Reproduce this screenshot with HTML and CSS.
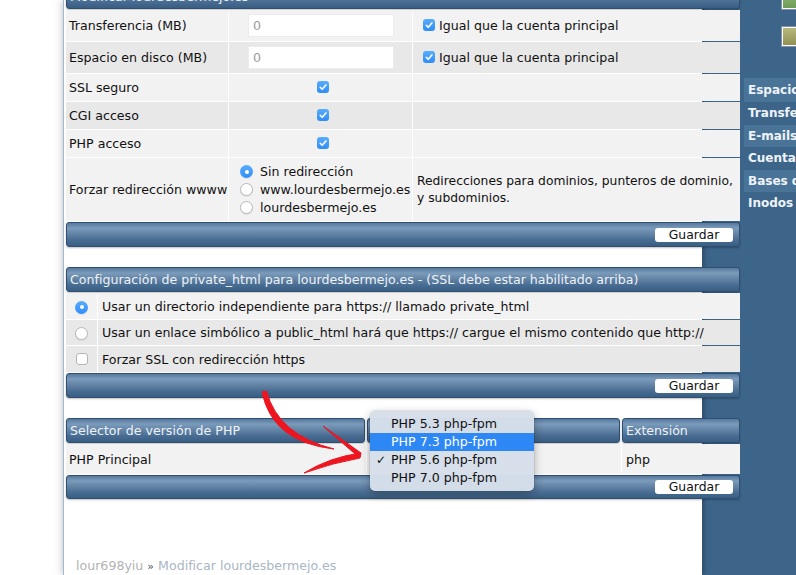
FILE: index.html
```html
<!DOCTYPE html>
<html lang="es">
<head>
    <meta charset="UTF-8">
    <title>Modificar lourdesbermejo.es</title>
    <link rel="stylesheet" href="styles.css">
</head>
<body>
    <div class="page">
        <div class="gutter"></div>

        <div class="main">
            <!-- datos del dominio -->
            <div class="box box-first">
                <div class="bar head">Modificar lourdesbermejo.es</div>
                <table class="grid">
                    <colgroup><col class="c-label"><col class="c-value"><col></colgroup>
                    <tr class="light r-input">
                        <td class="label">Transferencia (MB)</td>
                        <td class="value"><input class="field" type="text" placeholder="0"></td>
                        <td class="extra"><span class="chk on"><svg viewBox="0 0 12 12"><path d="M3.2 6.3 5.2 8.3 8.9 3.9"/></svg></span>Igual que la cuenta principal</td>
                    </tr>
                    <tr class="dark r-input">
                        <td class="label">Espacio en disco (MB)</td>
                        <td class="value"><input class="field" type="text" placeholder="0"></td>
                        <td class="extra"><span class="chk on"><svg viewBox="0 0 12 12"><path d="M3.2 6.3 5.2 8.3 8.9 3.9"/></svg></span>Igual que la cuenta principal</td>
                    </tr>
                    <tr class="light r-flag">
                        <td class="label">SSL seguro</td>
                        <td class="center"><span class="chk on"><svg viewBox="0 0 12 12"><path d="M3.2 6.3 5.2 8.3 8.9 3.9"/></svg></span></td>
                        <td></td>
                    </tr>
                    <tr class="dark r-flag">
                        <td class="label">CGI acceso</td>
                        <td class="center"><span class="chk on"><svg viewBox="0 0 12 12"><path d="M3.2 6.3 5.2 8.3 8.9 3.9"/></svg></span></td>
                        <td></td>
                    </tr>
                    <tr class="light r-flag">
                        <td class="label">PHP acceso</td>
                        <td class="center"><span class="chk on"><svg viewBox="0 0 12 12"><path d="M3.2 6.3 5.2 8.3 8.9 3.9"/></svg></span></td>
                        <td></td>
                    </tr>
                    <tr class="light r-redirect">
                        <td class="label">Forzar redirección wwww</td>
                        <td class="options">
                            <div class="opt"><span class="radio on"></span>Sin redirección</div>
                            <div class="opt"><span class="radio"></span>www.lourdesbermejo.es</div>
                            <div class="opt"><span class="radio"></span>lourdesbermejo.es</div>
                        </td>
                        <td class="note">Redirecciones para dominios, punteros de dominio, y subdominios.</td>
                    </tr>
                </table>
                <div class="bar foot"><button class="save">Guardar</button></div>
            </div>

            <!-- private_html -->
            <div class="box">
                <div class="bar head">Configuración de private_html para lourdesbermejo.es - (SSL debe estar habilitado arriba)</div>
                <table class="grid">
                    <colgroup><col class="c-mark"><col></colgroup>
                    <tr class="light r-ssl">
                        <td class="mark"><span class="radio on"></span></td>
                        <td class="text">Usar un directorio independiente para https:// llamado private_html</td>
                    </tr>
                    <tr class="dark r-ssl">
                        <td class="mark"><span class="radio"></span></td>
                        <td class="text">Usar un enlace simbólico a public_html hará que https:// cargue el mismo contenido que http://</td>
                    </tr>
                    <tr class="dark r-ssl">
                        <td class="mark"><span class="chk"></span></td>
                        <td class="text">Forzar SSL con redirección https</td>
                    </tr>
                </table>
                <div class="bar foot"><button class="save">Guardar</button></div>
            </div>

            <!-- selector de PHP -->
            <div class="box box-php">
                <div class="head-row">
                    <div class="bar head cell-a">Selector de versión de PHP</div>
                    <div class="bar head cell-b"></div>
                    <div class="bar head cell-c">Extensión</div>
                </div>
                <div class="php-row">
                    <div class="cell-a">PHP Principal</div>
                    <div class="cell-b"></div>
                    <div class="cell-c">php</div>
                </div>
                <div class="bar foot"><button class="save">Guardar</button></div>

                <svg class="pointer" viewBox="0 0 130 110" width="130" height="110">
                    <path class="brush" d="M12 12 Q 22 62 84 69 Q 28 55 16.5 11 Z"/>
                    <path class="brush" d="M73 46 L 111 73 L 108 76.5 Z"/>
                    <path class="brush" d="M111 73 Q 80 77 54 93 Q 82 83 110 78 Z"/>
                </svg>

                <ul class="menu">
                    <li>PHP 5.3 php-fpm</li>
                    <li class="hover">PHP 7.3 php-fpm</li>
                    <li class="current">PHP 5.6 php-fpm</li>
                    <li>PHP 7.0 php-fpm</li>
                </ul>
            </div>

            <div class="crumbs"><span class="user">lour698yiu</span> <span class="sep">»</span> <span class="here">Modificar lourdesbermejo.es</span></div>
        </div>

        <div class="side">
            <div class="swatch green"></div>
            <div class="swatch olive"></div>
            <ul class="usage">
                <li class="alt">Espacio</li>
                <li>Transfe</li>
                <li class="alt">E-mails</li>
                <li>Cuentas</li>
                <li class="alt">Bases d</li>
                <li>Inodos</li>
            </ul>
        </div>
    </div>
</body>
</html>
```

FILE: styles.css
```css
* {
    margin: 0;
    padding: 0;
    box-sizing: border-box;
}
body {
    background-color: white;
    font-family: "DejaVu Sans", Verdana, sans-serif;
    font-size: 12px;
    color: #111;
}
.page {
    display: flex;
    height: 575px;
    overflow: hidden;
}
.gutter {
    width: 63px;
    flex: none;
}
.main {
    width: 639px;
    flex: none;
    position: relative;
    z-index: 1;
    background-color: white;
    border-left: 1px solid #a3b9cf;
    box-shadow: -3px 0 7px rgba(0, 0, 0, 0.12), 2px 0 5px rgba(0, 0, 0, 0.25);
    padding-left: 2px;
}

/* cajas */
.box {
    width: 674px;
    position: relative;
    margin-top: 20px;
}
.box-first {
    margin-top: -16px;
}
.bar {
    border: 1px solid #2f4f70;
    border-radius: 3px;
    background: linear-gradient(to bottom, #57799d 0%, #7b9bbb 22%, #6686a8 45%, #4a6e93 72%, #395e83 100%);
    box-shadow: 0 1px 2px rgba(0, 0, 0, 0.25);
}
.head {
    height: 25px;
    line-height: 23px;
    padding-left: 3px;
    color: #edf2f7;
    font-size: 12.6px;
    white-space: nowrap;
    overflow: hidden;
}
.foot {
    height: 25px;
    display: flex;
    justify-content: flex-end;
    align-items: center;
    padding-right: 6px;
}
.save {
    width: 78px;
    height: 14px;
    border: none;
    border-radius: 3px;
    background-color: white;
    font-family: "DejaVu Sans", Verdana, sans-serif;
    font-size: 12.4px;
    line-height: 14px;
    color: #111;
}

/* tablas */
.grid {
    width: calc(100% + 2px);
    margin: 0 -1px;
    border-collapse: separate;
    border-spacing: 1px;
    table-layout: fixed;
}
.grid td {
    vertical-align: middle;
    font-size: 12.6px;
    white-space: nowrap;
}
.light td {
    background-color: #f2f2f2;
}
.dark td {
    background-color: #e8e8e8;
}
.c-label {
    width: 162px;
}
.c-value {
    width: 183px;
}
.c-mark {
    width: 31px;
}
.r-input td {
    height: 31px;
}
.r-flag td {
    height: 27px;
}
.r-redirect td {
    height: 63px;
}
.r-ssl td {
    height: 26px;
}
.r-ssl + .r-ssl td {
    height: 25px;
}
.r-ssl + .r-ssl + .r-ssl td {
    height: 26px;
}
.label {
    padding-left: 3px;
}
.value {
    padding-left: 19px;
}
.field {
    width: 146px;
    height: 23px;
    border: 1px solid #ececec;
    background-color: white;
    padding-left: 4px;
    font-family: "DejaVu Sans", Verdana, sans-serif;
    font-size: 12.6px;
    display: block;
}
.field::placeholder {
    color: #9a9a9a;
}
.extra {
    padding-left: 10px;
}
.extra .chk {
    margin-right: 4px;
}
.center {
    text-align: center;
    padding-left: 5px;
}
.options {
    padding-left: 11px;
}
.opt {
    height: 18px;
    display: flex;
    align-items: center;
}
.opt .radio {
    margin-right: 7px;
}
.grid .note {
    padding-left: 4px;
    white-space: normal;
    font-size: 12.3px;
    line-height: 17px;
}
.mark {
    text-align: center;
}
.text {
    padding-left: 4px;
}

/* controles */
.chk {
    display: inline-block;
    width: 12px;
    height: 12px;
    border-radius: 3px;
    vertical-align: -1px;
    background-color: white;
    border: 1px solid #b5b5b5;
}
.chk.on {
    border: none;
    background: linear-gradient(#59acfd, #2e8df8);
}
.chk svg {
    display: block;
    width: 12px;
    height: 12px;
}
.chk path {
    fill: none;
    stroke: white;
    stroke-width: 1.6;
    stroke-linecap: round;
    stroke-linejoin: round;
}
.radio {
    display: inline-block;
    width: 13px;
    height: 13px;
    border-radius: 50%;
    background-color: white;
    border: 1px solid #b8b8b8;
    box-shadow: 0 1px 1px rgba(0, 0, 0, 0.08);
    position: relative;
    vertical-align: middle;
}
.radio.on {
    border: none;
    background: linear-gradient(#5aacfd, #2f8df8);
}
.radio.on::after {
    content: "";
    position: absolute;
    left: 4.5px;
    top: 4.5px;
    width: 4px;
    height: 4px;
    border-radius: 50%;
    background-color: white;
}

/* selector de PHP */
.head-row {
    display: flex;
    gap: 2px;
}
.cell-a {
    width: 299px;
}
.cell-b {
    width: 253px;
}
.cell-c {
    flex: 1;
}
.php-row {
    display: flex;
    gap: 1px;
    margin-top: 1px;
    height: 30px;
    font-size: 12.6px;
}
.php-row div {
    background-color: #f2f2f2;
    display: flex;
    align-items: center;
    padding-left: 3px;
}
.php-row .cell-a {
    width: 300px;
}
.php-row .cell-b {
    width: 254px;
}
.php-row .cell-c {
    padding-left: 4px;
}
.box-php .foot {
    margin-top: 1px;
    height: 24px;
}
.menu {
    position: absolute;
    left: 304px;
    top: -7px;
    width: 164px;
    height: 80px;
    list-style: none;
    padding-top: 4px;
    border-radius: 5px;
    background-color: rgba(213, 222, 234, 0.98);
    box-shadow: 0 3px 10px rgba(0, 0, 0, 0.3), 0 0 0 1px rgba(0, 0, 0, 0.06);
    font-size: 12.6px;
    z-index: 3;
}
.menu li {
    height: 18px;
    line-height: 18px;
    padding-left: 21px;
    color: #111;
    position: relative;
}
.menu .hover {
    background-color: #2d88f6;
    color: white;
}
.menu .current::before {
    content: "✓";
    position: absolute;
    left: 6px;
    font-size: 12px;
}
.pointer {
    position: absolute;
    left: 184px;
    top: -38px;
    z-index: 2;
    overflow: visible;
}
.brush {
    fill: #ec1520;
    stroke: #ec1520;
    stroke-width: 1;
    stroke-linejoin: round;
}

.crumbs {
    margin-top: 59px;
    padding-left: 10px;
    font-size: 12.6px;
    color: #b3b3b3;
}
.sep {
    color: #555;
    font-size: 11px;
}
.here {
    color: #a9b6c4;
}

/* barra lateral */
.side {
    flex: 1;
    background-color: #3d658a;
    padding-left: 42px;
}
.swatch {
    margin-left: 38px;
    height: 19px;
    border: 1px solid white;
    box-shadow: 0 0 0 1px #7f93a8;
}
.green {
    margin-top: -10px;
    background: linear-gradient(#8fbb73, #6e9d58);
}
.olive {
    margin-top: 18px;
    background: linear-gradient(#b8b87e, #8f9152);
}
.usage {
    list-style: none;
    margin-top: 32px;
}
.usage li {
    height: 22.5px;
    line-height: 22.5px;
    padding-left: 4px;
    color: #eef3f8;
    font-weight: bold;
    font-size: 12px;
    white-space: nowrap;
    overflow: hidden;
}
.usage li:first-child {
    height: 24px;
    line-height: 24px;
}
.usage .alt {
    background-color: #4a7398;
}
```
